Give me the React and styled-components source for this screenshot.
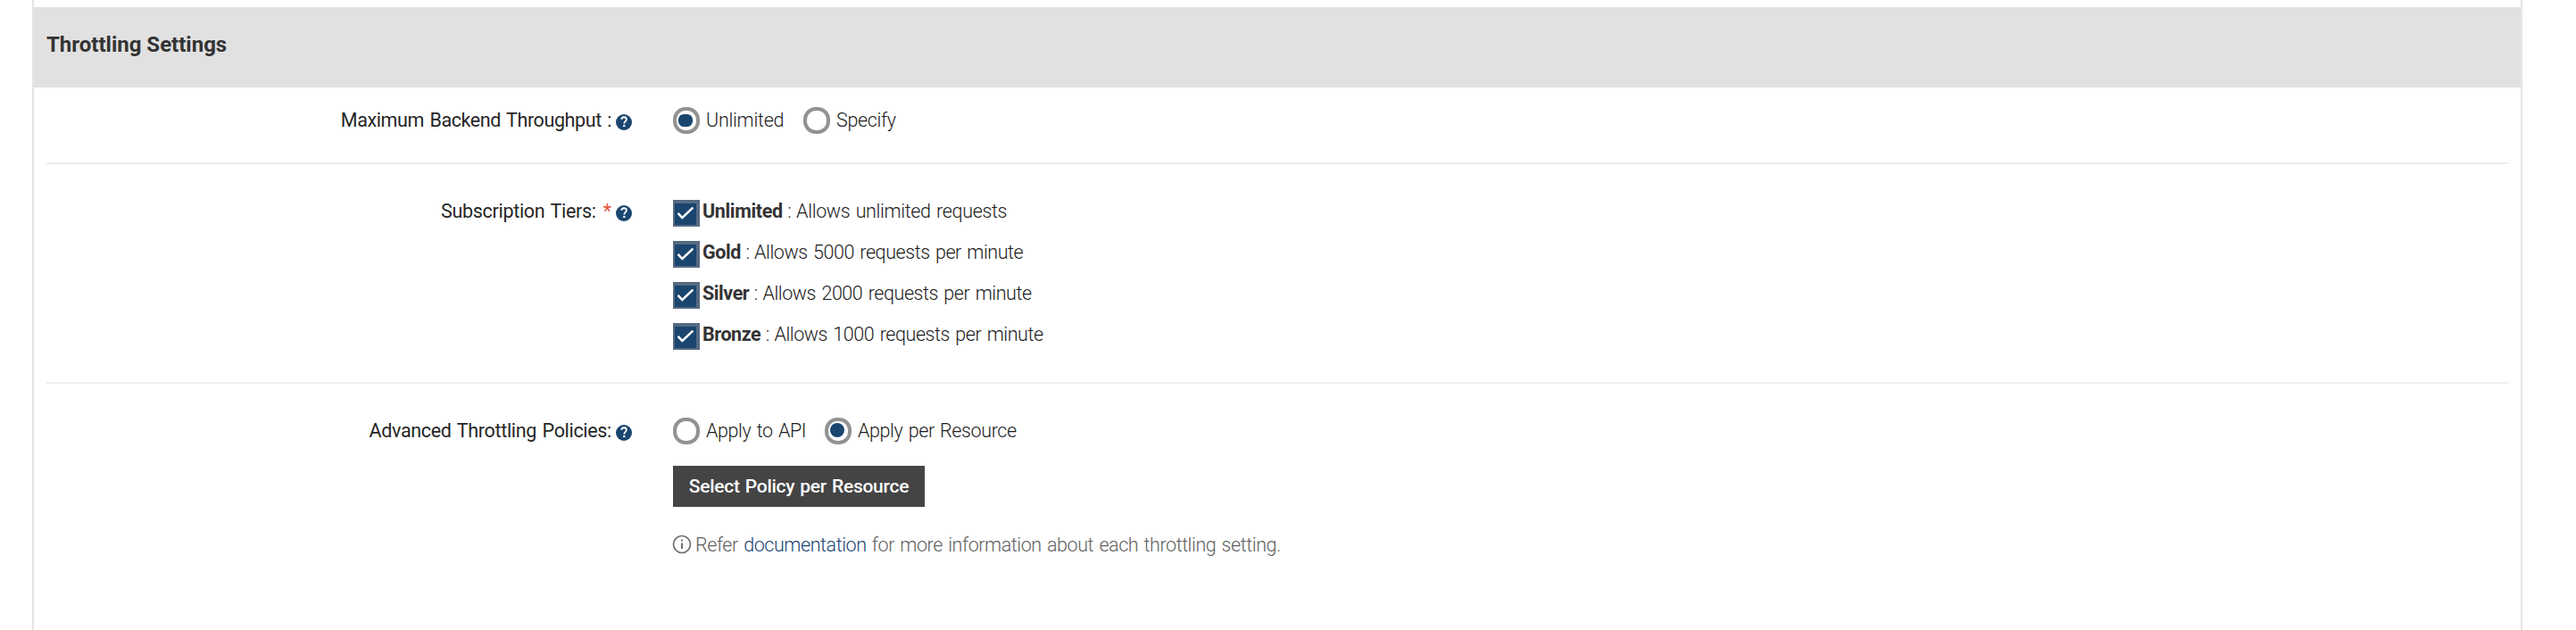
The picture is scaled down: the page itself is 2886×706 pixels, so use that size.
import React from "react";
import styled, { createGlobalStyle } from "styled-components";

const GlobalStyle = createGlobalStyle`
  * { box-sizing: border-box; }
  body {
    margin: 0;
    background: #fff;
    color: #333;
    font-family: Roboto, "Liberation Sans", sans-serif;
    font-size: 21.5px;
    font-weight: 350;
    word-spacing: 1.5px;
  }
`;

const Page = styled.main`
  height: 706px;
  padding: 0 60px 0 36px;
  overflow: hidden;
`;

const Panel = styled.section`
  height: 100%;
  padding-top: 8px;
  border: solid #e4e4e4;
  border-width: 0 2px;
`;

const PanelHeader = styled.header`
  height: 90px;
  padding: 0 14px;
  background: #e1e1e1;
`;

const Title = styled.h2`
  margin: 0;
  font-size: 24px;
  font-weight: 700;
  line-height: 84px;
  word-spacing: 0;
`;

const FormRow = styled.div`
  display: flex;
  height: ${(p) => p.$height}px;
  margin: 0 14px;
  padding-top: ${(p) => p.$top}px;
  border-bottom: ${(p) => (p.$last ? "none" : "2px solid #eee")};
`;

const Label = styled.div`
  display: flex;
  justify-content: flex-end;
  width: 656px;
  margin-right: 46px;
  line-height: 46px;
  color: #262626;
  font-weight: 400;
  white-space: pre;
`;

const Required = styled.span`
  margin-left: 8px;
  color: #e2543e;
`;

const HelpBadge = styled.svg`
  width: 18px;
  height: 18px;
  margin: 16px 0 0 5px;
`;

const Controls = styled.div`
  line-height: 46px;
  color: #1c1c1c;
  white-space: pre;
`;

const RadioGroup = styled.div`
  display: flex;
  height: 46px;
`;

const RadioOption = styled.label`
  display: flex;
  width: ${(p) => p.$width}px;
`;

const RadioMark = styled.span`
  width: 30px;
  height: 30px;
  margin: 8px 7px 0 0;
  padding: ${(p) => (p.$flat ? "4px 0 0 2px" : "2px 0 0 2px")};
  border: 4px solid #929292;
  border-radius: 14px;

  &::before {
    content: "";
    display: ${(p) => (p.$on ? "block" : "none")};
    width: 16px;
    height: ${(p) => (p.$flat ? 14 : 16)}px;
    border-radius: ${(p) => (p.$flat ? "6px" : "50%")};
    background: #1a456f;
  }
`;

const Tier = styled.label`
  display: flex;
  height: 46px;
`;

const CheckMark = styled.span`
  width: 30px;
  height: 30px;
  margin: 10px 3px 0 0;
  border: solid #566a82;
  border-width: 4px 4px 2px 2px;
  background: #1a456f;

  svg { display: block; }
`;

const Text = styled.span`
  letter-spacing: ${(p) => p.$spacing || -0.4}px;
`;

const TierName = styled.strong`
  color: #333;
  font-weight: 700;
`;

const Separator = styled.span`
  word-spacing: 0.7px;
`;

const PolicyButton = styled.button`
  display: block;
  width: 282px;
  height: 46px;
  margin-top: 16px;
  padding: 0;
  border: 0;
  background: #444;
  color: #fff;
  font: 500 21px/46px Roboto, "Liberation Sans", sans-serif;
  letter-spacing: -0.26px;
  word-spacing: 1px;
`;

const Hint = styled.p`
  display: flex;
  margin: 20px 0 0;
  color: #5f5f5f;
`;

const InfoIcon = styled.svg`
  width: 22px;
  height: 22px;
  margin: 11px 4px 0 -1px;
`;

const DocLink = styled.a`
  color: #1a456f;
`;

function Help() {
  return (
    <HelpBadge viewBox="0 0 18 18">
      <circle cx="9" cy="9" r="9" fill="#1a456f" />
      <path d="M6.200 5.700C6.500 4.100 7.500 3.300 9 3.300c1.700 0 2.900 1 2.900 2.500 0 2-2.600 2.200-2.600 4.700" fill="none" stroke="#fff" strokeWidth="1.900" />
      <rect x="8.200" y="11.900" width="2.200" height="2.200" fill="#fff" />
    </HelpBadge>
  );
}

function Radio({ on, flat, width, spacing, children }) {
  return (
    <RadioOption $width={width}>
      <RadioMark $on={on} $flat={flat} />
      <Text $spacing={spacing}>{children}</Text>
    </RadioOption>
  );
}

const tiers = [
  ["Unlimited", "Allows unlimited requests", -0.35],
  ["Gold", "Allows 5000 requests per minute", -0.43],
  ["Silver", "Allows 2000 requests per minute", -0.43],
  ["Bronze", "Allows 1000 requests per minute", -0.43],
];

export default function App() {
  return (
    <Page>
      <GlobalStyle />
      <Panel>
        <PanelHeader>
          <Title>Throttling Settings</Title>
        </PanelHeader>

        <FormRow $height={86} $top={14}>
          <Label><Text>Maximum Backend Throughput :</Text><Help /></Label>
          <Controls>
            <RadioGroup>
              <Radio on flat width={146} spacing={-0.25}>Unlimited</Radio>
              <Radio spacing={-0.35}>Specify</Radio>
            </RadioGroup>
          </Controls>
        </FormRow>

        <FormRow $height={246} $top={30}>
          <Label><Text $spacing={-0.3}>Subscription Tiers:</Text><Required>*</Required><Help /></Label>
          <Controls>
            {tiers.map(([name, description, spacing]) => (
              <Tier key={name}>
                <CheckMark>
                  <svg width="24" height="24" viewBox="0 0 24 24">
                    <path d="M3.500 10.800l4.900 5.200L20.400 4.600" fill="none" stroke="#fff" strokeWidth="2.500" />
                  </svg>
                </CheckMark>
                <Text $spacing={spacing}><TierName>{name}</TierName><Separator>{" : "}</Separator>{description}</Text>
              </Tier>
            ))}
          </Controls>
        </FormRow>

        <FormRow $height={276} $top={30} $last>
          <Label><Text $spacing={-0.32}>Advanced Throttling Policies:</Text><Help /></Label>
          <Controls>
            <RadioGroup>
              <Radio width={170}>Apply to API</Radio>
              <Radio on spacing={-0.4}>Apply per Resource</Radio>
            </RadioGroup>
            <PolicyButton>Select Policy per Resource</PolicyButton>
            <Hint>
              <InfoIcon viewBox="0 0 22 22">
                <circle cx="11" cy="11" r="9.500" fill="none" stroke="#6f6f6f" strokeWidth="1.700" />
                <path d="M11 9.500V16M11 5.500V7.500" fill="none" stroke="#6f6f6f" strokeWidth="2" />
              </InfoIcon>
              <Text $spacing={-0.43}>Refer <DocLink>documentation</DocLink> for more information about each throttling setting.</Text>
            </Hint>
          </Controls>
        </FormRow>
      </Panel>
    </Page>
  );
}
